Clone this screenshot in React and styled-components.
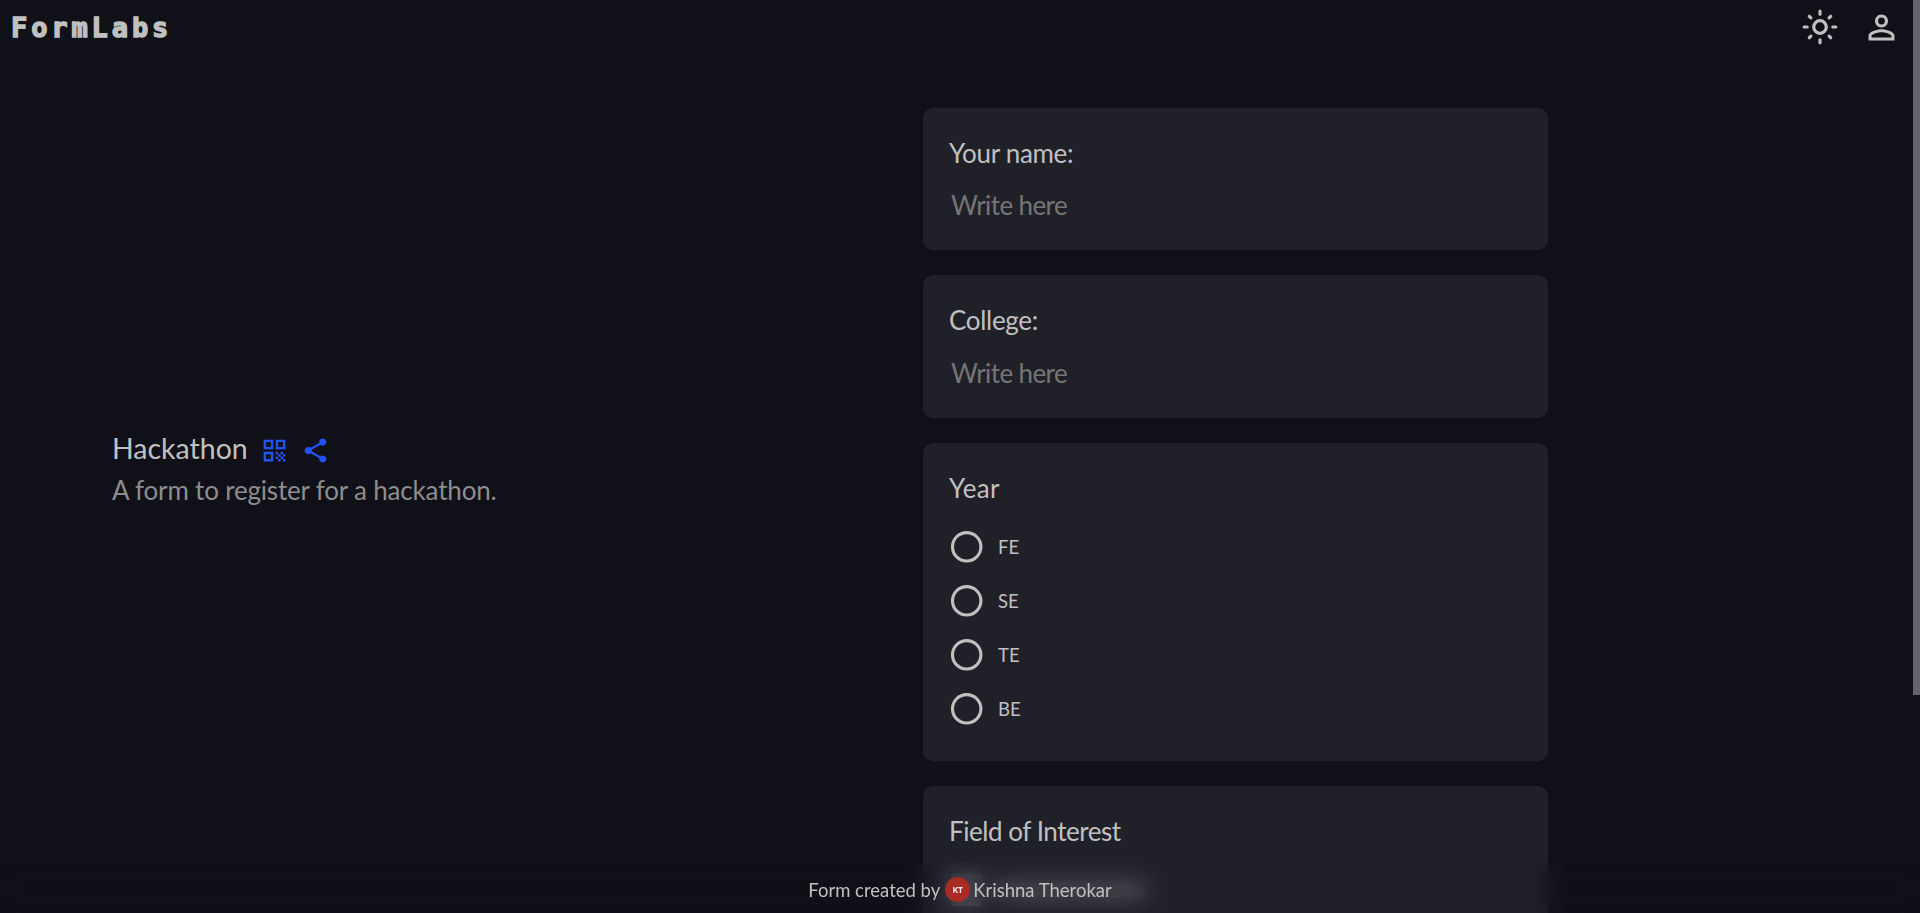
import React from "react";
import styled, { createGlobalStyle } from "styled-components";
import { MdPersonOutline, MdQrCode, MdShare } from "react-icons/md";

const GlobalStyle = createGlobalStyle`
  * { box-sizing: border-box; }
  body {
    margin: 0;
    height: 913px;
    overflow: hidden;
    background: #101018;
    color: #c0c0c0;
    font-family: Lato, "Noto Sans", sans-serif;
  }
`;

const Page = styled.div`
  height: 913px;
  overflow: hidden;
  display: flex;
  flex-direction: column;
`;
const Header = styled.header`
  height: 54px;
  flex: none;
  display: flex;
  align-items: center;
  justify-content: space-between;
  padding: 0 19px 0 11px;
`;
const Logo = styled.div`
  padding-top: 1px;
  font: bold 27px/54px "DejaVu Sans Mono", monospace;
  letter-spacing: 3.9px;
  color: #c0c0c0;
  -webkit-text-stroke: 1.4px #c0c0c0;
`;
const HeaderActions = styled.nav`
  display: flex;
  align-items: center;
  gap: 22px;
`;
const Main = styled.main`
  flex: 1;
  min-height: 0;
  display: flex;
`;
const Intro = styled.section`
  width: 923px;
  padding: 374px 0 0 112px;
`;
const TitleRow = styled.div`
  display: flex;
  align-items: center;
  height: 40px;
  margin-bottom: 6px;
  color: #2451ff;
`;
const Line = styled.span`
  display: block;
  white-space: nowrap;
  font-size: ${(p) => p.$size}px;
  letter-spacing: ${(p) => p.$track || 0}px;
  color: ${(p) => p.$color || "#c0c0c0"};
`;
const IconSlot = styled.span`
  display: flex;
  margin: 5px 0 0 ${(p) => p.$gap}px;
`;
const Form = styled.section`
  width: 625px;
  padding-top: 54px;
  display: flex;
  flex-direction: column;
  gap: 25px;
`;
const Card = styled.article`
  flex: none;
  height: ${(p) => p.$h}px;
  padding: 25px 26px 0;
  border-radius: 10px;
  background: #202029;
`;
const Question = styled.h2`
  margin: 0;
  font-size: 26px;
  font-weight: 400;
  line-height: 40px;
  letter-spacing: ${(p) => p.$track || 0}px;
`;
const Answer = styled.input`
  display: block;
  width: 100%;
  height: 40px;
  margin-top: ${(p) => p.$top}px;
  padding: 0 2px;
  border: 0;
  outline: 0;
  background: transparent;
  color: #c0c0c0;
  font: 400 26px Lato, sans-serif;
  letter-spacing: -0.6px;
  &::placeholder { color: #757575; opacity: 1; }
`;
const Options = styled.div`
  display: flex;
  flex-direction: column;
  gap: 22px;
  padding: 23px 2px 0;
`;
const Option = styled.label`
  display: flex;
  align-items: center;
  gap: 15px;
  height: 32px;
  font-size: 18.5px;
`;
const RingSvg = styled.svg`
  width: 32px;
  height: 32px;
  fill: none;
  stroke: #c0c0c0;
  stroke-width: 3.1px;
`;
const CheckSquare = styled.span`
  width: 30px;
  height: 32px;
  background: #505058;
`;
const LabelBar = styled.span`
  width: 150px;
  height: 14px;
  background: #5c5c64;
`;
const Footer = styled.footer`
  position: fixed;
  left: 0;
  right: 0;
  bottom: 0;
  height: 50px;
  padding-top: 3px;
  display: flex;
  justify-content: center;
  align-items: center;
  backdrop-filter: blur(12px);
`;
const Avatar = styled.span`
  width: 25px;
  height: 25px;
  margin: 0 3px 0 5px;
  border-radius: 50%;
  background: #a82c24;
  color: #f0e8e8;
  font: bold 8.5px/25px "Open Sans", sans-serif;
  text-align: center;
`;
const Scrollbar = styled.div`
  position: fixed;
  top: 0;
  right: 0;
  width: 7px;
  height: 695px;
  background: #666370;
`;

const SunIcon = () => (
  <svg width="40" height="40" viewBox="-20 -20 40 40" fill="none" stroke="currentColor" strokeWidth="3.2" strokeLinecap="round">
    <circle r="6.3" />
    <path d="M0-15.8V-12.8M0 12.8V15.8M-15.8 0H-12.8M12.8 0H15.8M-10.7-10.7L-9.1-9.1M10.7-10.7L9.1-9.1M-10.7 10.7L-9.1 9.1M10.7 10.7L9.1 9.1" />
  </svg>
);

const Ring = () => (
  <RingSvg viewBox="0 0 32 32">
    <circle cx="15.7" cy="15.8" r="14.2" />
  </RingSvg>
);

export default function App() {
  return (
    <Page>
      <GlobalStyle />
      <Header>
        <Logo>FormLabs</Logo>
        <HeaderActions>
          <SunIcon />
          <MdPersonOutline size={39} />
        </HeaderActions>
      </Header>
      <Main>
        <Intro>
          <TitleRow>
            <Line $size={28.5}>Hackathon</Line>
            <IconSlot $gap={12}><MdQrCode size={29} /></IconSlot>
            <IconSlot $gap={12}><MdShare size={29} /></IconSlot>
          </TitleRow>
          <Line $size={26} $track={-0.18} $color="#8d8d8d">A form to register for a hackathon.</Line>
        </Intro>
        <Form>
          <Card $h={142}>
            <Question $track={-0.3}>Your name:</Question>
            <Answer $top={12} placeholder="Write here" />
          </Card>
          <Card $h={143}>
            <Question $track={-0.3}>College:</Question>
            <Answer $top={13} placeholder="Write here" />
          </Card>
          <Card $h={318}>
            <Question $track={0.3}>Year</Question>
            <Options>
              {["FE", "SE", "TE", "BE"].map((label) => (
                <Option key={label}><Ring />{label}</Option>
              ))}
            </Options>
          </Card>
          <Card $h={318}>
            <Question $track={-0.45}>Field of Interest</Question>
            <Options>
              <Option><CheckSquare /><LabelBar /></Option>
            </Options>
          </Card>
        </Form>
      </Main>
      <Footer>
        <Line $size={18.5}>Form created by</Line>
        <Avatar>KT</Avatar>
        <Line $size={18.5}>Krishna Therokar</Line>
      </Footer>
      <Scrollbar />
    </Page>
  );
}
